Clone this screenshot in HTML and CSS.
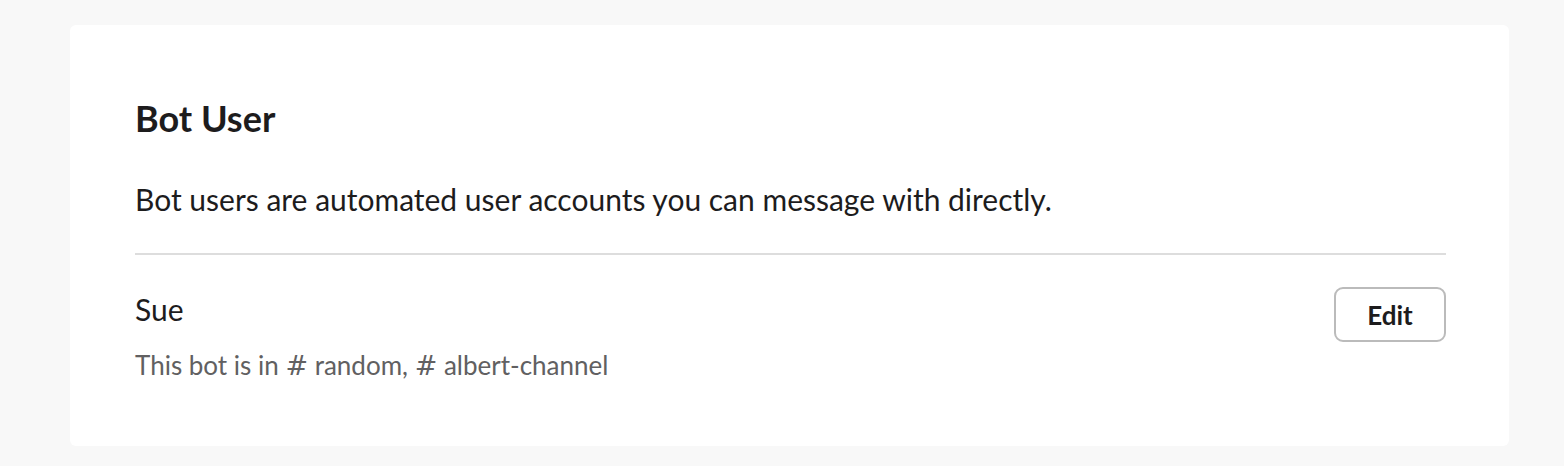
FILE: index.html
```html
<!DOCTYPE html>
<html lang="en">
<head>
    <meta charset="UTF-8">
    <meta name="viewport" content="width=device-width, initial-scale=1.0">
    <title>Bot User</title>
    <link rel="stylesheet" href="styles.css">
</head>
<body>
    <div class="card">
        <h2 class="card-title">Bot User</h2>
        <p class="card-desc">Bot users are automated user accounts you can message with directly.</p>
        <div class="bot-row">
            <div class="bot-info">
                <div class="bot-name">Sue</div>
                <div class="bot-channels">This bot is in <span class="hash">#</span> random, <span class="hash">#</span> albert-channel</div>
            </div>
            <button class="button">Edit</button>
        </div>
    </div>
</body>
</html>
```

FILE: styles.css
```css
body {
    margin: 0;
    padding: 25px 55px 20px 70px;
    background-color: #f8f8f8;
    font-family: Lato, "Open Sans", sans-serif;
    color: #1d1c1d;
}
.card {
    background-color: #fff;
    border-radius: 6px;
    padding: 71px 63px 65px 65px;
}
.card-title {
    margin: 0;
    font-size: 36px;
    font-weight: 700;
    line-height: 44px;
}
.card-desc {
    margin: 39px 0 0;
    font-size: 30px;
    line-height: 40px;
    padding-bottom: 34px;
    border-bottom: 2px solid #dddddd;
}
.bot-row {
    display: flex;
    justify-content: space-between;
    align-items: flex-start;
    padding-top: 32px;
}
.bot-info {
    padding-top: 4px;
}
.bot-name {
    font-size: 30px;
    line-height: 36px;
}
.bot-channels {
    margin-top: 22px;
    font-size: 26px;
    line-height: 32px;
    color: #616061;
}
.hash {
    font-family: "DejaVu Sans", sans-serif;
    font-size: 27px;
    line-height: 20px;
}
.button {
    width: 112px;
    height: 55px;
    font-family: Lato, sans-serif;
    font-size: 26px;
    font-weight: 700;
    color: #1d1c1d;
    background-color: #fff;
    border: 2px solid #bbbbbb;
    border-radius: 9px;
    cursor: pointer;
}
```
